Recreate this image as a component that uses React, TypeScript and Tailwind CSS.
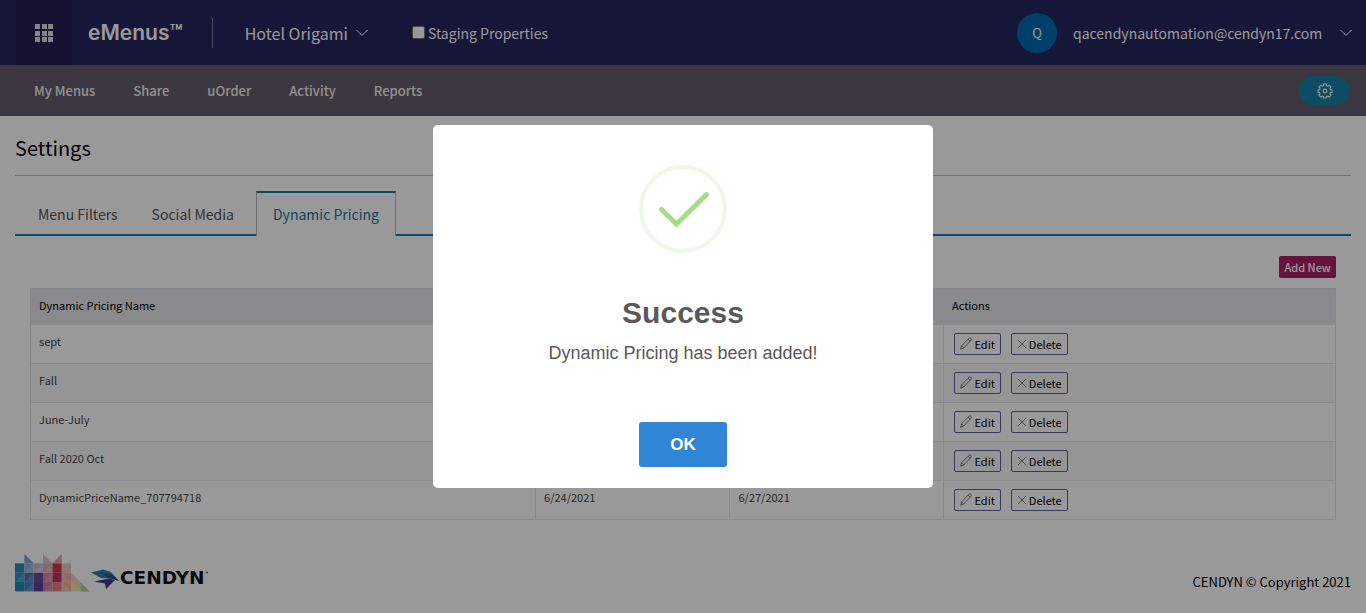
import { useState } from "react";

const navLinks = ["My Menus", "Share", "uOrder", "Activity", "Reports"];
const tabs = ["Menu Filters", "Social Media", "Dynamic Pricing"];
const rows = [
  { name: "sept", start: "", end: "" },
  { name: "Fall", start: "", end: "" },
  { name: "June-July", start: "", end: "" },
  { name: "Fall 2020 Oct", start: "", end: "" },
  { name: "DynamicPriceName_707794718", start: "6/24/2021", end: "6/27/2021" },
];

function Chevron() {
  return (
    <svg width="12" height="8" viewBox="0 0 12 8" fill="none" stroke="currentColor" strokeWidth="1" aria-hidden="true">
      <path d="M0.5 1 L6 6.5 L11.5 1" />
    </svg>
  );
}

function GridIcon() {
  const cells = [0, 7, 13];
  return (
    <svg width="18" height="18" viewBox="0 0 18 18" fill="currentColor" aria-hidden="true">
      {cells.map((y) => cells.map((x) => <rect key={`${x}-${y}`} x={x} y={y} width="5" height="5" />))}
    </svg>
  );
}

function GearIcon() {
  return (
    <svg width="16" height="16" viewBox="0 0 24 24" fill="none" stroke="currentColor" strokeWidth="1.6" strokeLinejoin="round" aria-hidden="true">
      <path d="M9.8 1.5h4.4v2.6a8 8 0 0 1 2 .9l1.9-1.8 3 3-1.9 1.9a8 8 0 0 1 .9 2h2.4v4.2h-2.4a8 8 0 0 1-.9 2l1.9 1.9-3 3-1.9-1.8a8 8 0 0 1-2 .9v2.2H9.8v-2.2a8 8 0 0 1-2-.9l-1.9 1.8-3-3 1.8-1.9a8 8 0 0 1-.8-2H1.5v-4.2h2.4a8 8 0 0 1 .8-2L2.9 6.2l3-3L7.8 5a8 8 0 0 1 2-.9z" />
      <circle cx="12" cy="12" r="2.8" />
    </svg>
  );
}

function PencilIcon() {
  return (
    <svg width="12" height="13" viewBox="0 0 12 13" fill="none" stroke="#444" strokeWidth="0.7" strokeLinejoin="round" aria-hidden="true">
      <path d="M0.6 12.2 L1.6 8.8 L9 1.2 Q9.8 0.4 10.7 1.2 Q11.8 2.2 11 3.2 L3.8 11 Z" />
      <path d="M1.6 8.8 L3.8 11 M8 2.2 L10.2 4.2" />
    </svg>
  );
}

function CloseIcon() {
  return (
    <svg width="10" height="10" viewBox="0 0 10 10" stroke="#444" strokeWidth="0.7" aria-hidden="true">
      <path d="M1 1 L9 9 M9 1 L1 9" />
    </svg>
  );
}

function CendynLogo() {
  return (
    <svg width="194" height="40" viewBox="0 0 194 40" role="img" aria-label="Cendyn">
      <g transform="translate(0 2) scale(9.35)">
        <path fill="#7d9fc6" d="M1 0 L2 1 H1z" />
        <path fill="#ddc3c8" d="M3 0 L4 1 H3z" />
        <path fill="#e3a3a8" d="M5 0 L4 1 H5z" />
        <path fill="#3585bd" d="M0 1h1v1H0z" />
        <path fill="#8fb2d6" d="M1 1h1v1H1z" />
        <path fill="#cdbdd4" d="M2 1h1v1H2z" />
        <path fill="#dda9b8" d="M3 1h1v1H3z" />
        <path fill="#d0384a" d="M4 1h1v1H4z" />
        <path fill="#eac8c0" d="M5 1h1v1H5z" />
        <path fill="#2c93c5" d="M0 2h1v1H0z" />
        <path fill="#4b6db2" d="M1 2h1v1H1z" />
        <path fill="#6547a0" d="M2 2h1v1H2z" />
        <path fill="#df7f9f" d="M3 2h1v1H3z" />
        <path fill="#c4305f" d="M4 2h1v1H4z" />
        <path fill="#efb0a6" d="M5 2h1v1H5z" />
        <path fill="#f0d0be" d="M6 2l1 1H6z" />
        <path fill="#2286b8" d="M0 3h1v1H0z" />
        <path fill="#3f7fc0" d="M1 3h1v1H1z" />
        <path fill="#5f3f98" d="M2 3h1v1H2z" />
        <path fill="#c878aa" d="M3 3h1v1H3z" />
        <path fill="#ea8088" d="M4 3h1v1H4z" />
        <path fill="#f2b49a" d="M5 3h1v1H5z" />
        <path fill="#eedca6" d="M6 3h1v1H6z" />
        <path fill="#b4cf98" d="M7 3l1 1H7z" />
        <path
          fill="#fff"
          fillOpacity="0.18"
          d="M0 3L1 2V3z M1 2L2 1V2z M1 4L2 3V4z M1 3L2 2V3z M2 2L3 1V2z M3 3L4 2V3z M3 2L4 1V2z M3 4L4 3V4z M5 4V3L6 4z M5 3V2L6 3z M6 4V3L7 4z"
        />
      </g>
      <path fill="#2b7fae" d="M76 20.5 L88 17.5 L96 20 L104 29 L96 26.5 L86 26z" />
      <path fill="#2a4f96" d="M86 21 L98 23 L104 29 L94 26z" />
      <path fill="#4a3590" d="M79 29.5 L94 26.5 L100 28 L91 37 L90 31.5z" />
      <text x="105" y="32" fontFamily="'DejaVu Sans'" fontWeight="bold" fontSize="18.5" fill="#111">CENDYN</text>
      <circle cx="192" cy="20.5" r="0.8" fill="#111" />
    </svg>
  );
}

export default function App() {
  const [open, setOpen] = useState(true);
  return (
    <div className="min-h-screen bg-white font-['Noto_Sans_CJK_SC',sans-serif] text-black">
      <header className="flex h-[65px] items-center bg-[#25255e] text-white">
        <button className="ml-4 flex h-full w-14 items-center justify-center bg-[#202052] text-[#ddd]" aria-label="Applications">
          <GridIcon />
        </button>
        <span className="ml-4 font-['Inter',sans-serif] text-[21px] leading-6 font-semibold">eMenus™</span>
        <span className="ml-[29px] h-[30px] w-px bg-[#8080a0]" />
        <button className="ml-8 flex items-center gap-2 text-base leading-6">
          Hotel Origami
          <Chevron />
        </button>
        <label className="ml-11 flex items-center gap-[3px] text-sm leading-6">
          <input type="checkbox" className="size-[13px] appearance-none rounded-xs border border-[#767676] bg-white" />
          Staging Properties
        </label>
        <button className="mr-[14px] ml-auto flex items-center text-sm leading-6">
          <span className="mr-4 flex size-10 items-center justify-center rounded-full bg-[#0069b0] text-[13px]">Q</span>
          <span className="mr-3 min-w-[255px] text-left">qacendynautomation@cendyn17.com</span>
          <Chevron />
        </button>
      </header>

      <nav className="flex h-[51px] items-center bg-[#615d6b] pr-4 pl-[34px] text-[#f4f0f0]">
        <div className="flex gap-[38px] text-[13px] leading-6 font-medium">
          {navLinks.map((link) => (
            <a key={link} href="#">{link}</a>
          ))}
        </div>
        <button className="ml-auto flex h-[29px] w-[51px] items-center justify-center rounded-full bg-[#1580a8] text-white" aria-label="Settings">
          <GearIcon />
        </button>
      </nav>

      <main className="px-[15px]">
        <h1 className="border-b border-[#c4c4c4] pt-[17px] pb-3 text-xl leading-[30px]">Settings</h1>
        <div className="mt-[15px] flex h-[45px] border-b-2 border-[#0f7ea6] pl-1.5 text-sm" role="tablist">
          {tabs.map((tab, i) => (
            <button
              key={tab}
              role="tab"
              aria-selected={i === 2}
              className={
                i === 2
                  ? "-mb-0.5 ml-[5px] border-x border-t-2 border-x-[#b4b4b4] border-t-[#0f7ea6] bg-white px-4 pb-0.5 text-[#16769b]"
                  : "px-[17px] pt-0.5 text-[#555]"
              }
            >
              {tab}
            </button>
          ))}
        </div>
        <section className="px-[15px] pt-5">
          <div className="mb-[10px] flex justify-end">
            <button className="h-[22px] rounded-xs bg-[#a82067] px-[5px] text-[11px] leading-5 font-medium text-white">Add New</button>
          </div>
          <table className="w-full table-fixed border-collapse border border-[#dfe1e4] text-[11px] leading-4">
            <colgroup>
              <col className="w-[38.7%]" />
              <col className="w-[14.9%]" />
              <col className="w-[16.4%]" />
              <col />
            </colgroup>
            <thead>
              <tr className="h-9 bg-[#e6e7eb] text-left align-top">
                <th className="px-2 pt-2 font-normal">Dynamic Pricing Name</th>
                <th className="px-2 pt-2 font-normal" aria-label="Start" />
                <th className="px-2 pt-2 font-normal" aria-label="End" />
                <th className="px-2 pt-2 font-normal">Actions</th>
              </tr>
            </thead>
            <tbody>
              {rows.map((row) => (
                <tr key={row.name} className="h-[39px] border-t border-[#e4e5e8] align-top text-[#444] even:bg-[#f9f9f9]">
                  <td className="border-r border-[#e4e5e8] px-2 pt-2">{row.name}</td>
                  <td className="border-r border-[#e4e5e8] px-2 pt-2">{row.start}</td>
                  <td className="border-r border-[#e4e5e8] px-2 pt-2">{row.end}</td>
                  <td className="px-2.5 pt-2">
                    <div className="flex gap-2.5 text-black">
                      <button className="flex h-[22px] items-center gap-0.5 rounded-xs border border-[#5c5ca0] px-[5px] pb-px">
                        <PencilIcon />
                        Edit
                      </button>
                      <button className="flex h-[22px] items-center gap-0.5 rounded-xs border border-[#5c5ca0] px-[5px] pb-px">
                        <CloseIcon />
                        Delete
                      </button>
                    </div>
                  </td>
                </tr>
              ))}
            </tbody>
          </table>
        </section>
      </main>

      <footer className="flex items-end justify-between px-[15px] pt-8">
        <CendynLogo />
        <p className="text-[13px] leading-5">CENDYN © Copyright 2021</p>
      </footer>

      {open && (
        <div className="fixed inset-0 flex items-center justify-center bg-black/40">
          <div
            role="dialog"
            aria-modal="true"
            aria-labelledby="dialog-title"
            className="flex w-full max-w-[500px] flex-col items-center rounded-[5px] bg-white px-5 pt-10 pb-[21px] font-['Liberation_Sans',Arial,sans-serif] text-[#595959]"
          >
            <svg width="88" height="88" viewBox="0 0 88 88" fill="none" aria-hidden="true">
              <circle cx="44" cy="44" r="42" stroke="#edf8e7" strokeWidth="4" />
              <path d="M22.5 44.5 L37.5 59 L67.5 29.5" stroke="#a5dc86" strokeWidth="5" strokeLinecap="round" />
            </svg>
            <h2 id="dialog-title" className="mt-10 text-[30px] leading-10 font-bold">Success</h2>
            <p className="mt-2 text-lg leading-6">Dynamic Pricing has been added!</p>
            <button
              onClick={() => setOpen(false)}
              className="mt-[57px] h-[45px] w-[88px] rounded-[3px] bg-[#3085d6] text-[17px] font-bold text-white"
            >
              OK
            </button>
          </div>
        </div>
      )}
    </div>
  );
}
